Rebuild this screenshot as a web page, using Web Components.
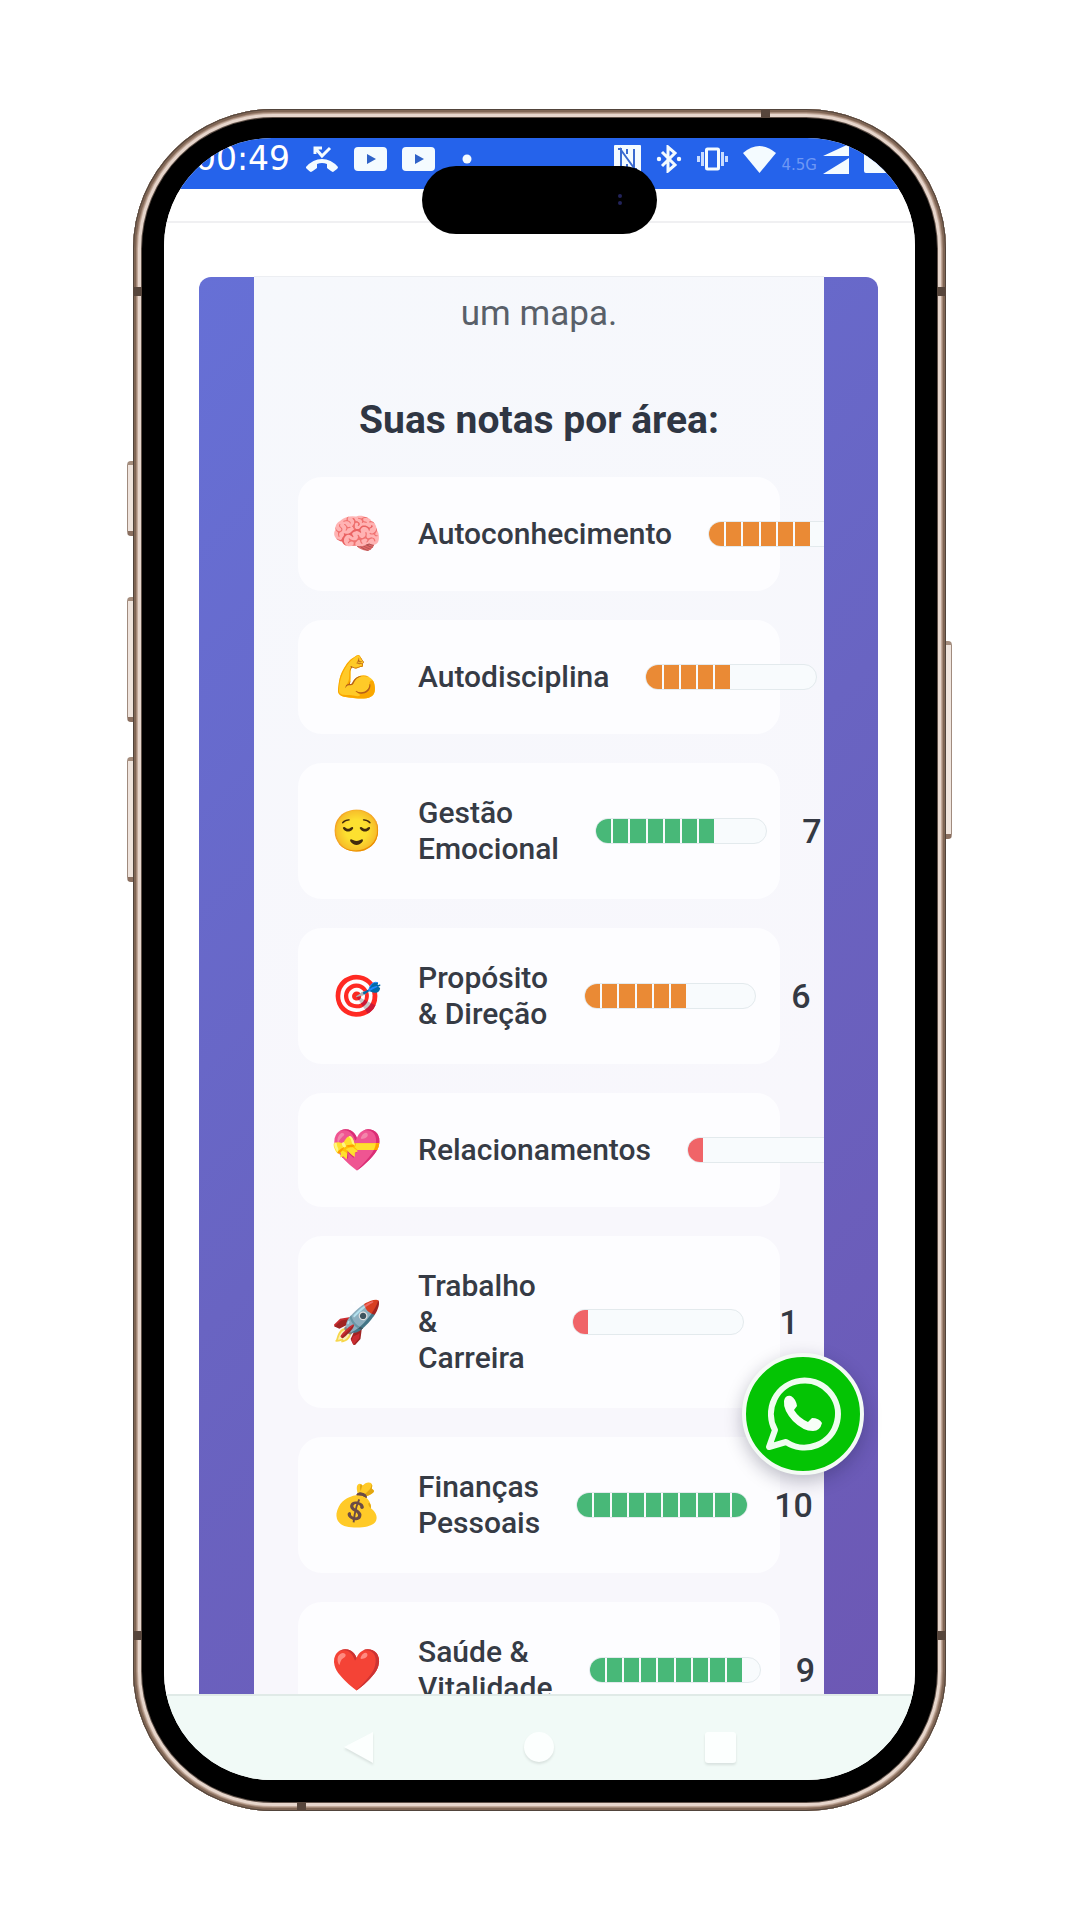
<!DOCTYPE html>
<html lang="pt-BR">
<head>
<meta charset="utf-8">
<meta name="viewport" content="width=device-width, initial-scale=1">
<title>Suas notas por área</title>
<style>
  html, body { margin: 0; background: #fff; }
  body { box-sizing: border-box; height: 100vh; padding: 109px 17px 109px 16px; font-family: Roboto, "Noto Sans", sans-serif; color: #363b45; display: flex; justify-content: center; }
</style>
</head>
<body>
<phone-frame>
  <status-bar slot="screen"></status-bar>
  <result-page slot="screen">
    <span slot="intro">um mapa.</span>
    <span slot="title">Suas notas por área:</span>
    <score-card icon="🧠" score="6" tone="mid">Autoconhecimento</score-card>
    <score-card icon="💪" score="5" tone="mid">Autodisciplina</score-card>
    <score-card icon="😌" score="7" tone="good">Gestão Emocional</score-card>
    <score-card icon="🎯" score="6" tone="mid">Propósito &amp; Direção</score-card>
    <score-card icon="💝" score="1" tone="low">Relacionamentos</score-card>
    <score-card icon="🚀" score="1" tone="low">Trabalho &amp; Carreira</score-card>
    <score-card icon="💰" score="10" tone="good">Finanças Pessoais</score-card>
    <score-card icon="❤️" score="9" tone="good">Saúde &amp; Vitalidade</score-card>
  </result-page>
  <nav-bar slot="screen"></nav-bar>
  <chat-button slot="float"></chat-button>
</phone-frame>

<script>
const define = (name, html, setup) => {
  const tpl = document.createElement('template');
  tpl.innerHTML = html;
  customElements.define(name, class extends HTMLElement {
    constructor() {
      super();
      this.attachShadow({ mode: 'open' }).append(tpl.content.cloneNode(true));
    }
    connectedCallback() { if (setup) setup(this, this.shadowRoot); }
  });
};

define('phone-frame', `
<style>
  :host { display: block; position: relative; box-sizing: border-box; width: 100%; max-width: 813px; height: 100%; }
  .body { position: relative; box-sizing: border-box; height: 100%; padding: 29px 31px 31px; border-radius: 140px; background: #000; }
  .rim { position: absolute; inset: 0; border-radius: 140px; pointer-events: none; box-shadow: inset 0 0 0 1px #51443b, inset 0 0 0 3px #806655, inset 0 0 0 4px #a38877, inset 0 0 0 5px #c3aa9b, inset 0 0 0 8px #e6d5cb, inset 0 0 0 9px #5e5048; }
  .screen { position: relative; height: 100%; border-radius: 108px; overflow: hidden; background: #fff; display: flex; flex-direction: column; }
  .island { position: absolute; top: 57px; left: 289px; width: 235px; height: 68px; border-radius: 34px; background: #000; }
  .island i { position: absolute; right: 35px; width: 4px; height: 4px; border-radius: 50%; background: #22235a; }
  .key { position: absolute; box-sizing: border-box; width: 7px; border: 1px solid #a08b7e; border-top: 4px solid #a58d7d; border-bottom: 5px solid #8a6f60; background: #efe4dd; }
  .l { left: -6px; border-radius: 4px 0 0 4px; }
  .r { right: -6px; border-radius: 0 4px 4px 0; }
  .band { position: absolute; background: #57463c; }
  .h { width: 9px; height: 9px; }
</style>
<div class="key l" style="top:352px;height:75px"></div>
<div class="key l" style="top:488px;height:125px"></div>
<div class="key l" style="top:648px;height:125px"></div>
<div class="key r" style="top:532px;height:198px"></div>
<div class="body">
  <div class="screen"><slot name="screen"></slot></div>
  <div class="rim"></div>
  <div class="band h" style="left:0;top:178px"></div>
  <div class="band h" style="right:0;top:178px"></div>
  <div class="band h" style="left:0;bottom:171px"></div>
  <div class="band h" style="right:0;bottom:171px"></div>
  <div class="band h" style="right:176px;top:0"></div>
  <div class="band h" style="left:164px;bottom:0"></div>
  <div class="island"><i style="top:28px"></i><i style="top:35px"></i></div>
  <slot name="float"></slot>
</div>`);

define('status-bar', `
<style>
  :host { display: flex; justify-content: space-between; align-items: center; flex: none; box-sizing: border-box; height: 51px; padding: 0 25px 9px 31px; background: #2563eb; color: #fff; font-family: "DejaVu Sans", sans-serif; }
  div { display: flex; align-items: center; gap: 15px; }
  time { font-size: 33px; line-height: 42px; }
  small { font: 15px/18px "DejaVu Sans", sans-serif; color: #6f98f4; align-self: flex-end; }
  svg { display: block; fill: #f4fbff; }
  .dot { margin-left: 12px; }
  .net { display: flex; align-items: center; gap: 6px; }
</style>
<div>
  <time>00:49</time>
  <svg width="34" height="26" viewBox="0 0 34 26"><path d="M1 21Q8 13 17 13T33 21Q33 22 32 23L28 26Q27 26 22 22V18Q17 16 12 18V22Q8 25 6 26Q5 26 1 22Z"/><path d="M10 8V2H17M11 3L17 10L25 2" fill="none" stroke="#f4fbff" stroke-width="3"/></svg>
  <svg width="33" height="24" viewBox="0 0 33 24"><rect width="33" height="24" rx="4"/><path d="M13 7L22 12L13 17Z" fill="#2f62c8"/></svg>
  <svg width="33" height="24" viewBox="0 0 33 24"><rect width="33" height="24" rx="4"/><path d="M13 7L22 12L13 17Z" fill="#2f62c8"/></svg>
  <svg class="dot" width="10" height="10" viewBox="0 0 10 10"><circle cx="5" cy="5" r="4.5"/></svg>
</div>
<div>
  <svg width="27" height="28" viewBox="0 0 27 28"><rect width="27" height="28" rx="1"/><path d="M7 24V5L20 23V4M4 4H8M19 24H23M13 4V9M13 19V24" fill="none" stroke="#3a6ad0" stroke-width="2"/></svg>
  <svg width="26" height="28" viewBox="0 0 26 28"><path d="M6 7L19 20L12 26V2L19 8L6 21" fill="none" stroke="#f4fbff" stroke-width="3"/><circle cx="3" cy="14" r="2.2"/><circle cx="23" cy="14" r="2.2"/></svg>
  <svg width="31" height="24" viewBox="0 0 31 24"><rect x="9.500" y="2" width="12" height="20" rx="1" fill="none" stroke="#f4fbff" stroke-width="3"/><path d="M1.500 9V15M5.500 5V19M25.500 5V19M29.500 9V15" stroke="#c9dcff" stroke-width="3"/></svg>
  <span class="net">
  <svg width="33" height="27" viewBox="0 0 33 27"><path d="M0 7Q8 0 16.500 0T33 7L16.500 27Z"/></svg>
  <small>4.5G</small>
  <svg width="26" height="30" viewBox="0 0 26 30"><path d="M26 0V12H0ZM26 14V30H0Z"/></svg></span>
  <svg width="26" height="28" viewBox="0 0 26 28"><path d="M0 2H7V0H19V2H26V26Q26 28 24 28H2Q0 28 0 26Z"/></svg>
</div>`);

define('result-page', `
<style>
  :host { display: flex; flex-direction: column; flex: 1; min-height: 0; overflow: hidden; background: #fff; }
  header { flex: none; height: 32px; border-bottom: 2px solid #f0f0f2; }
  main { flex: none; margin: 54px 37px 0 35px; padding: 0 54px 0 55px; border-radius: 12px 12px 0 0; background: linear-gradient(135deg, #6670d6, #6964c2 48%, #6d57b3); }
  section { overflow: hidden; padding: 9px 44px 60px; background: linear-gradient(160deg, #f6f8fc, #f8f7fc 60%); box-shadow: 0 -1px #eceef2; }
  p { margin: 0; font-size: 35px; line-height: 56px; text-align: center; color: #596069; }
  h2 { margin: 55px 0 34px; font-size: 39px; line-height: 46px; font-weight: 700; text-align: center; color: #2f3643; }
  .list { display: flex; flex-direction: column; gap: 29px; }
</style>
<header></header>
<main><section>
  <p><slot name="intro"></slot></p>
  <h2><slot name="title"></slot></h2>
  <div class="list"><slot></slot></div>
</section></main>`);

define('score-card', `
<style>
  :host { display: flex; align-items: center; box-sizing: border-box; min-height: 114px; padding: 32px; border-radius: 24px; background: #fdfdff; font-size: 30px; line-height: 36px; font-weight: 500; }
  .icon { flex: none; width: 54px; margin-right: 34px; font-size: 41px; text-align: center; line-height: 50px; font-family: "Noto Color Emoji", sans-serif; }
  .label { flex: 1 1 0; min-width: min-content; }
  .bar { flex: none; display: flex; gap: 2px; box-sizing: border-box; width: 172px; height: 26px; margin-left: 36px; border: 1px solid #e3eaed; border-radius: 13px; overflow: hidden; background: #f8fbfd; }
  .bar i { flex: 1; }
  .bar i.on { background: var(--tone); }
  .num { flex: none; width: 38px; margin-left: 26px; text-align: center; font-size: 34px; font-weight: 500; color: #343943; }
  :host([tone=mid]) { --tone: #ea8a35; }
  :host([tone=good]) { --tone: #48b878; }
  :host([tone=low]) { --tone: #f06468; }
</style>
<span class="icon" aria-hidden="true"></span>
<span class="label"><slot></slot></span>
<span class="bar" role="img"></span>
<span class="num"></span>`, (el, root) => {
  const score = Number(el.getAttribute('score'));
  root.querySelector('.icon').textContent = el.getAttribute('icon');
  root.querySelector('.num').textContent = score;
  const bar = root.querySelector('.bar');
  bar.setAttribute('aria-label', score + ' / 10');
  bar.replaceChildren(...Array.from({ length: 10 }, (_, n) => {
    const seg = document.createElement('i');
    if (n < score) seg.className = 'on';
    return seg;
  }));
});

define('nav-bar', `
<style>
  :host { display: flex; flex: none; box-sizing: border-box; height: 86px; padding-top: 19px; border-top: 2px solid #e0eae7; background: #f1faf7; justify-content: center; align-items: center; gap: 148px; }
  button { border: 0; padding: 0; background: none; display: block; }
  svg { display: block; fill: #fcfffe; filter: drop-shadow(0 2px 1px #d9e2df); }
</style>
<button aria-label="Voltar"><svg width="33" height="33" viewBox="0 0 33 33"><path d="M2 16L31 1V32Z"/></svg></button>
<button aria-label="Início"><svg width="33" height="33" viewBox="0 0 33 33"><circle cx="16" cy="16" r="15"/></svg></button>
<button aria-label="Recentes"><svg width="33" height="33" viewBox="0 0 33 33"><rect x="1" y="1" width="31" height="31" rx="3"/></svg></button>`);

define('chat-button', `
<style>
  :host { display: block; position: absolute; right: 82px; bottom: 336px; }
  button { display: block; box-sizing: border-box; width: 122px; height: 122px; padding: 0; border: 4px solid #f4fbf5; border-radius: 50%; background: #04c404; box-shadow: 0 6px 18px rgba(20, 20, 50, .28); }
  svg { display: block; margin: auto; }
</style>
<button aria-label="WhatsApp"><svg width="78" height="78" viewBox="0 0 78 78"><path d="M5 72L11 55A33.500 33.500 0 1 1 22 67Z" fill="none" stroke="#effdf0" stroke-width="6" stroke-linejoin="round"/><path d="M20 26Q21 20 27 21Q32 24 33 31L30 35Q35 43 44 47L48 43Q55 43 58 48Q56 56 49 56Q39 56 29 46Q19 35 20 26Z" fill="#f8fff8"/></svg></button>`);
</script>
</body>
</html>
